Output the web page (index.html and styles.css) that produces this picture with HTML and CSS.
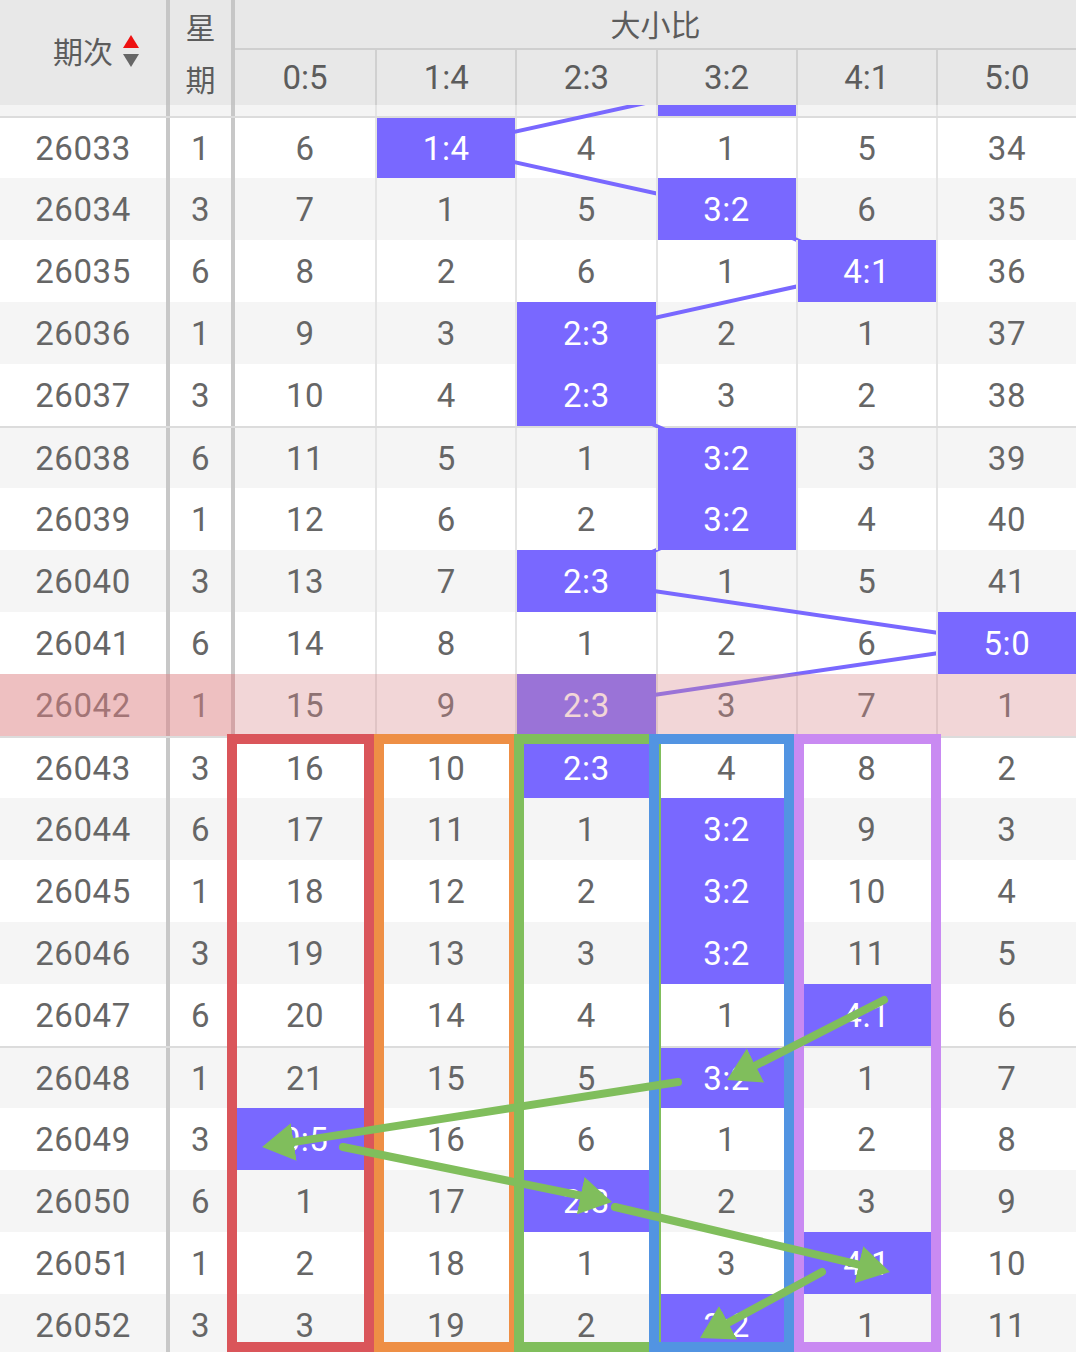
FILE: index.html
```html
<!DOCTYPE html>
<html lang="zh">
<head>
<meta charset="utf-8">
<title>大小比走势</title>
<link rel="stylesheet" href="styles.css">
</head>
<body>
<div class="page">
  <div class="thead">
    <div class="h-no"><span class="h-no-txt">期次<svg class="sort" width="18" height="32" viewBox="0 0 18 32"><path d="M1,13 L9,0 L17,13 Z" fill="#ee1111"/><path d="M1,19 L17,19 L9,32 Z" fill="#666"/></svg></span></div>
    <div class="h-wk"><span>星</span><span>期</span></div>
    <div class="h-grp">大小比</div>
    <div class="h-d">0:5</div>
    <div class="h-d">1:4</div>
    <div class="h-d">2:3</div>
    <div class="h-d">3:2</div>
    <div class="h-d">4:1</div>
    <div class="h-d">5:0</div>
  </div>

  <div class="tbody">
    <svg class="trend" width="1076" height="1247" viewBox="0 0 1076 1247">
      <polyline points="727,-20 446,42 727,104 867,166 586,228 586,290 727,352 727,414 586,476 1007,538 586,600" fill="none" stroke="#7968ff" stroke-width="4" stroke-linejoin="round"/>
    </svg>

    <div class="row strip"><div class="c no"></div><div class="c wk"></div><div class="c d"></div><div class="c d"></div><div class="c d"></div><div class="c d on"></div><div class="c d"></div><div class="c d"></div></div>

    <div class="row grp"><div class="c no">26033</div><div class="c wk">1</div><div class="c d">6</div><div class="c d on">1:4</div><div class="c d">4</div><div class="c d">1</div><div class="c d">5</div><div class="c d">34</div></div>
    <div class="row alt"><div class="c no">26034</div><div class="c wk">3</div><div class="c d">7</div><div class="c d">1</div><div class="c d">5</div><div class="c d on">3:2</div><div class="c d">6</div><div class="c d">35</div></div>
    <div class="row"><div class="c no">26035</div><div class="c wk">6</div><div class="c d">8</div><div class="c d">2</div><div class="c d">6</div><div class="c d">1</div><div class="c d on">4:1</div><div class="c d">36</div></div>
    <div class="row alt"><div class="c no">26036</div><div class="c wk">1</div><div class="c d">9</div><div class="c d">3</div><div class="c d on">2:3</div><div class="c d">2</div><div class="c d">1</div><div class="c d">37</div></div>
    <div class="row"><div class="c no">26037</div><div class="c wk">3</div><div class="c d">10</div><div class="c d">4</div><div class="c d on">2:3</div><div class="c d">3</div><div class="c d">2</div><div class="c d">38</div></div>
    <div class="row alt grp"><div class="c no">26038</div><div class="c wk">6</div><div class="c d">11</div><div class="c d">5</div><div class="c d">1</div><div class="c d on">3:2</div><div class="c d">3</div><div class="c d">39</div></div>
    <div class="row"><div class="c no">26039</div><div class="c wk">1</div><div class="c d">12</div><div class="c d">6</div><div class="c d">2</div><div class="c d on">3:2</div><div class="c d">4</div><div class="c d">40</div></div>
    <div class="row alt"><div class="c no">26040</div><div class="c wk">3</div><div class="c d">13</div><div class="c d">7</div><div class="c d on">2:3</div><div class="c d">1</div><div class="c d">5</div><div class="c d">41</div></div>
    <div class="row"><div class="c no">26041</div><div class="c wk">6</div><div class="c d">14</div><div class="c d">8</div><div class="c d">1</div><div class="c d">2</div><div class="c d">6</div><div class="c d on">5:0</div></div>
    <div class="row hl"><div class="c no">26042</div><div class="c wk">1</div><div class="c d">15</div><div class="c d">9</div><div class="c d on">2:3</div><div class="c d">3</div><div class="c d">7</div><div class="c d">1</div></div>
    <div class="row grp"><div class="c no">26043</div><div class="c wk">3</div><div class="c d">16</div><div class="c d">10</div><div class="c d on">2:3</div><div class="c d">4</div><div class="c d">8</div><div class="c d">2</div></div>
    <div class="row alt"><div class="c no">26044</div><div class="c wk">6</div><div class="c d">17</div><div class="c d">11</div><div class="c d">1</div><div class="c d on">3:2</div><div class="c d">9</div><div class="c d">3</div></div>
    <div class="row"><div class="c no">26045</div><div class="c wk">1</div><div class="c d">18</div><div class="c d">12</div><div class="c d">2</div><div class="c d on">3:2</div><div class="c d">10</div><div class="c d">4</div></div>
    <div class="row alt"><div class="c no">26046</div><div class="c wk">3</div><div class="c d">19</div><div class="c d">13</div><div class="c d">3</div><div class="c d on">3:2</div><div class="c d">11</div><div class="c d">5</div></div>
    <div class="row"><div class="c no">26047</div><div class="c wk">6</div><div class="c d">20</div><div class="c d">14</div><div class="c d">4</div><div class="c d">1</div><div class="c d on">4:1</div><div class="c d">6</div></div>
    <div class="row alt grp"><div class="c no">26048</div><div class="c wk">1</div><div class="c d">21</div><div class="c d">15</div><div class="c d">5</div><div class="c d on">3:2</div><div class="c d">1</div><div class="c d">7</div></div>
    <div class="row"><div class="c no">26049</div><div class="c wk">3</div><div class="c d on">0:5</div><div class="c d">16</div><div class="c d">6</div><div class="c d">1</div><div class="c d">2</div><div class="c d">8</div></div>
    <div class="row alt"><div class="c no">26050</div><div class="c wk">6</div><div class="c d">1</div><div class="c d">17</div><div class="c d on">2:3</div><div class="c d">2</div><div class="c d">3</div><div class="c d">9</div></div>
    <div class="row"><div class="c no">26051</div><div class="c wk">1</div><div class="c d">2</div><div class="c d">18</div><div class="c d">1</div><div class="c d">3</div><div class="c d on">4:1</div><div class="c d">10</div></div>
    <div class="row alt"><div class="c no">26052</div><div class="c wk">3</div><div class="c d">3</div><div class="c d">19</div><div class="c d">2</div><div class="c d on">3:2</div><div class="c d">1</div><div class="c d">11</div></div>
  </div>

  <div class="box b-red"></div>
  <div class="box b-orange"></div>
  <div class="box b-green"></div>
  <div class="box b-blue"></div>
  <div class="box b-purple"></div>

  <svg class="arrows" width="1076" height="1352" viewBox="0 0 1076 1352">
    <defs>
      <marker id="ah" markerUnits="userSpaceOnUse" markerWidth="34" markerHeight="40" refX="12" refY="19" orient="auto">
        <path d="M0,0 L32,19 L0,38 Z" fill="#80be5c"/>
      </marker>
    </defs>
    <g stroke="#80be5c" stroke-width="8" stroke-linecap="round" fill="none">
      <line x1="884" y1="1000" x2="744.8" y2="1070.9" marker-end="url(#ah)"/>
      <line x1="678" y1="1082" x2="281.8" y2="1143.9" marker-end="url(#ah)"/>
      <line x1="343" y1="1147" x2="592.4" y2="1198" marker-end="url(#ah)"/>
      <line x1="615" y1="1207" x2="870.5" y2="1267.4" marker-end="url(#ah)"/>
      <line x1="822" y1="1272" x2="717.6" y2="1328.5" marker-end="url(#ah)"/>
    </g>
  </svg>
</div>
</body>
</html>
```

FILE: styles.css
```css
html, body {
  margin: 0;
  padding: 0;
  background: #ffffff;
}

body {
  width: 1076px;
  height: 1352px;
  overflow: hidden;
  font-family: Roboto, "Noto Sans", "Noto Sans CJK SC", sans-serif;
  color: #666666;
}

.page {
  position: relative;
  width: 1076px;
  height: 1352px;
  overflow: hidden;
  isolation: isolate;
}

/* ---------- header ---------- */
.thead {
  position: relative;
  z-index: 10;
  display: grid;
  grid-template-columns: 166px 69px repeat(6, 1fr);
  grid-template-rows: 50px 55px;
  background: #e8e8e8;
  color: #5c5c5c;
  font-size: 30px;
  font-family: "Noto Sans CJK SC", "Noto Sans", sans-serif;
}

.h-no {
  grid-column: 1;
  grid-row: 1 / 3;
  display: flex;
  align-items: center;
  justify-content: center;
  padding-bottom: 6px;
  box-sizing: border-box;
}

.h-no-txt {
  position: relative;
}

.sort {
  position: absolute;
  right: -27px;
  top: 50%;
  margin-top: -15px;
}

.h-wk {
  grid-column: 2;
  grid-row: 1 / 3;
  display: flex;
  flex-direction: column;
  align-items: center;
  border-left: 4px solid #c6c6c6;
  border-right: 4px solid #c6c6c6;
  line-height: 52px;
}

.h-grp {
  grid-column: 3 / 9;
  grid-row: 1;
  display: flex;
  align-items: center;
  justify-content: center;
  border-bottom: 2px solid #cfcfcf;
  padding-bottom: 2px;
}

.h-d {
  grid-row: 2;
  display: flex;
  align-items: center;
  justify-content: center;
  font-size: 33px;
  font-family: Roboto, "Noto Sans", sans-serif;
}

.h-d + .h-d {
  border-left: 2px solid #d0d0d0;
}

/* ---------- body ---------- */
.tbody {
  position: relative;
  height: 1247px;
  overflow: hidden;
}

.trend {
  position: absolute;
  left: 0;
  top: 0;
  z-index: 1;
  overflow: visible;
}

.row {
  display: grid;
  grid-template-columns: 166px 69px repeat(6, 1fr);
  height: 62px;
  box-sizing: border-box;
  background: #ffffff;
}

.row.alt {
  background: #f5f5f5;
}

.row.grp {
  border-top: 2px solid #dcdcdc;
}

.row.strip {
  height: 11px;
  background: #f4f4f4;
}

.c {
  display: flex;
  align-items: center;
  justify-content: center;
  font-size: 33px;
  letter-spacing: 0.6px;
}

.wk {
  border-left: 4px solid #c8c8c8;
  border-right: 4px solid #c8c8c8;
}

.d + .d {
  border-left: 2px solid #e4e4e4;
}

.on {
  position: relative;
  z-index: 2;
  background: #7968ff;
  color: #ffffff;
}

.row.hl {
  position: relative;
}

.row.hl::after {
  content: "";
  position: absolute;
  left: 0;
  top: 0;
  right: 0;
  bottom: 0;
  background: rgba(218, 138, 141, 0.35);
  z-index: 3;
}

.row.hl::before {
  content: "";
  position: absolute;
  left: 0;
  top: 0;
  bottom: 0;
  width: 235px;
  background: rgba(230, 120, 125, 0.25);
  z-index: 3;
}

/* ---------- annotation boxes ---------- */
.box {
  position: absolute;
  top: 734px;
  height: 618px;
  box-sizing: border-box;
  border: 10px solid;
  z-index: 5;
}

.b-red    { left: 227px; width: 147px; border-color: #da555a; }
.b-orange { left: 374px; width: 145px; border-color: #ee8f45; }
.b-green  { left: 514px; width: 147px; border-color: #80be5c; }
.b-blue   { left: 649px; width: 145px; border-color: #5294e2; }
.b-purple { left: 794px; width: 147px; border-color: #c98af2; }

.arrows {
  position: absolute;
  left: 0;
  top: 0;
  z-index: 6;
  pointer-events: none;
}
```
